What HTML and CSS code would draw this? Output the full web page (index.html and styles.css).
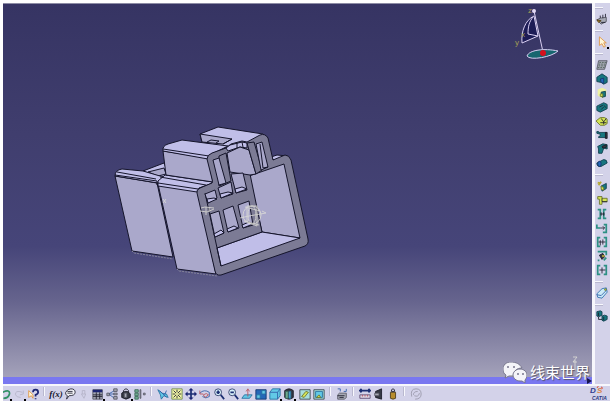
FILE: index.html
```html
<!DOCTYPE html>
<html lang="zh-CN">
<head>
    <meta charset="UTF-8">
    <meta name="viewport" content="width=device-width, initial-scale=1.0">
    <title>CATIA</title>
    <link rel="stylesheet" href="styles.css">
</head>
<body>
    <div class="app">
        <main class="viewport">
            <svg class="scene" viewBox="3 4 589 373" preserveAspectRatio="xMinYMin meet" role="img" aria-label="Connector part">
                <g class="part">
                    <!-- rear right tab -->
                    <path class="top" d="M200 134L218 127L263 134L266 137L250 147L223 147L202 142Z"/>
                    <path class="side" d="M200 134L232 139L223 144L202 142Z"/>
                    <path d="M207 142l4-2 8 1-3 2M223 144l9-5" fill="none"/>
                    <!-- left block -->
                    <path class="top" d="M143 171L164 163L170 176L165 180Z"/>
                    <path class="side" d="M148 172L164 168L166 174L158 176Z"/>
                    <path class="side" d="M115 176L157 183L173 257L132 251Z"/>
                    <path class="top" d="M115 176Q115 170 122 169L143 171L160 176L201 182L197 189L158 183Z"/>
                    <path d="M115 175L157 181V185M117 172L156 179" fill="none"/>
                    <!-- middle block -->
                    <path class="side" d="M158 184L198 191L216 274L177 269Z"/>
                    <path class="top" d="M158 181L165 175L213 182L210 184L199 188L197 192L158 186Z"/>
                    <path d="M158 183L198 189M160 177L206 185" fill="none"/>
                    <path class="edge" d="M132 251l2 2 39 6M177 269l2 2 38 5"/>
                    <!-- front left tab -->
                    <path class="side" d="M163 151L208 158L213 182L166 175Z"/>
                    <path class="top" d="M163 151Q162 146 168 144L182 140L228 146L210 155L208 159Z"/>
                    <path d="M163 149L209 156" fill="none"/>
                    <path class="top" d="M271 157L277 155L288 156L275 161Z"/>
                    <!-- front frame -->
                    <path class="front" d="M207 159Q207 155 212 153L226 148L231 144L242 141L247 142L260 135Q265 133 268 138L273 160L285 155Q289 155 291 160L308 239Q309 244 305 246L221 275Q216 276 215 271L197 193Q196 190 200 188L212 183Q213 182 212 179Z"/>
                    <path class="top" d="M226 148L230 145L242 142L247 143V148L240 147L228 151Z"/>
                    <path d="M237 143v5M242 142l1 5" fill="none"/>
                    <!-- cavity -->
                    <path class="side" d="M249 176L284 164L300 238L262 232Z"/>
                    <path class="top" d="M262 232L300 238L221 266L217 248Z"/>
                    <path class="front" d="M205 193L250 174L262 232L217 248Z" stroke="none"/>
                    <path d="M205 193L221 266M217 248L262 232L250 174" fill="none"/>
                    <path class="side" d="M227 153L240 147L249 150L256 174L250 175L230 172Z"/>
                    <path class="front" d="M249 150L247 143L254 142L262 170L256 174Z"/>
                    <path class="side" d="M256 144L262 142L268 167L261 170Z"/>
                    <path d="M260 144L263 168L268 167" fill="none"/>
                    <path class="front" d="M219 156L226 153L231 181L219 186Z"/>
                    <path class="side" d="M213 160L219 158L226 183L219 185Z"/>
                    <path class="side" d="M205 194L215 190L217 198L208 203ZM218 188L231 182L233 194L221 198ZM231 174L243 173L247 190L236 193ZM210 214L219 211L224 233L215 237ZM223 210L233 206L239 228L228 232ZM238 205L249 201L253 225L243 228Z"/>
                    <path class="top" d="M207 199l7-1 3 1-9 4zM220 194l8-2 5 1-12 5zM235 189l7-2 5 2-11 4zM214 234l7-4 3 3-9 4zM227 229l7-3 4 2-10 4zM242 225l7-3 4 2-10 4z"/>
                </g>
                <g class="ghost">
                    <ellipse cx="252" cy="215" rx="9" ry="9"/>
                    <ellipse cx="252" cy="215" rx="4" ry="9"/>
                    <path d="M240 218l9-2 17-3-4-2M245 207l15 4M244 221l15 4M247 206v16l10 4V206zM201 208l4-1 9 1M200 211l7 1 7-3M206 207v8M209 207v5M163 199l3 4M166 199l-3 4"/>
                    <path d="M575 360v11M573 357h4l-4 5h4"/>
                </g>
                <!-- compass -->
                <g class="compass">
                    <path class="sail" d="M534 16C525 20 521 32 522 43L538 36Z"/>
                    <path d="M533 17C529 22 528 27 528 34L538 36M534 11L543 52"/>
                    <path class="hull" d="M527 56C529 50 544 48 558 51C552 57 530 61 527 56Z"/>
                    <circle class="tip" cx="534" cy="11" r="2"/>
                    <circle class="pivot" cx="543" cy="53" r="3"/>
                    <text x="528" y="13">z</text>
                    <text x="521" y="37">x</text>
                    <text x="515" y="45">y</text>
                </g>
            </svg>
            <div class="watermark">
                <svg viewBox="0 0 24 21" aria-hidden="true">
                    <path d="M8 0C3 0 0 3 0 7c0 3 1 5 3 6l-1 3 4-2 5 0c-1-5 3-8 8-8C17 2 13 0 8 0z"/>
                    <path d="M17 7c-4 0-7 3-7 6s3 6 7 6h2l3 2v-3c1-1 2-3 2-5 0-3-3-6-7-6z"/>
                    <g class="eyes"><circle cx="5" cy="5" r="1"/><circle cx="11" cy="5" r="1"/><circle cx="15" cy="12" r="1"/><circle cx="20" cy="12" r="1"/></g>
                </svg>
                <span>线束世界</span>
            </div>
        </main>
        <div class="scrollbar"><i></i></div>

        <aside class="sidebar">
            <div class="tools">
                <button type="button" aria-label="Workbench"><svg viewBox="0 0 14 14"><path class="gray" d="M1 8l4-2 7-1v5l-6 3z"/><path class="k" d="M5 6V3M8 6V2M11 5V1M6 11h5"/><path class="gold" d="M1 8l5 1-3 2z"/></svg></button>
            </div>
            <div class="tools">
                <button type="button" class="more" aria-label="Select"><svg viewBox="0 0 14 14"><path class="cursor" d="M4 1v10l3-2 2 4 2-1-2-4h3z"/></svg></button>
            </div>
            <div class="tools">
                <button type="button" aria-label="Sketch"><svg viewBox="0 0 14 14"><path class="gray" d="M3 2h10l-3 10H1z"/><path class="dash" d="M4 4h8M3 6h8M3 8h8M2 10h8"/></svg></button>
                <button type="button" aria-label="Pad"><svg viewBox="0 0 14 14"><path class="teal" d="M1 5l6-4 6 4v6l-4 2-3-2-5-1z"/><path class="blue" d="M5 7l4-1v6l-3-1z"/></svg></button>
                <button type="button" aria-label="Pocket"><svg viewBox="0 0 14 14"><path class="pale" d="M2 3l5-2 5 2v7l-5 3-5-3z"/><path class="teal" d="M6 6l5-1v6l-4 1z"/><path class="lime" d="M5 8h3v3H5z"/></svg></button>
                <button type="button" aria-label="Shaft"><svg viewBox="0 0 14 14"><path class="teal" d="M1 6l8-4 4 2v5l-8 4-4-2z"/><path class="k" d="M4 7l4-2M6 10l3-3M9 5l3 3"/></svg></button>
                <button type="button" aria-label="Groove"><svg viewBox="0 0 14 14"><path class="lime" d="M0 7l5-4h5l3 2v5l-3 2H5z"/><path class="k" d="M6 4l3 4 3-4M5 9h7M9 8v3"/></svg></button>
                <button type="button" aria-label="Hole"><svg viewBox="0 0 14 14"><path class="teal" d="M1 3h2v1h9v6H3V9l2-1V6L1 5z"/><path class="dark" d="M11 4h2v7h-2z"/></svg></button>
                <button type="button" aria-label="Rib"><svg viewBox="0 0 14 14"><path class="teal" d="M2 4l6-3 5 1v5l-4-1-2 6H3V7z"/><path class="dark" d="M7 4l5-2v3l-4 1z"/></svg></button>
                <button type="button" aria-label="Slot"><svg viewBox="0 0 14 14"><path class="teal" d="M1 7l8-4q4 0 4 4l-7 4q-5 1-5-4z"/><ellipse class="blue" cx="4" cy="8" rx="2" ry="3"/></svg></button>
            </div>
            <div class="tools">
                <button type="button" aria-label="Fillet"><svg viewBox="0 0 14 14"><path class="teal" d="M6 7l6-3v6l-5 3z"/><path class="lime" d="M6 7l3 2v3l-3-1z"/><path class="goldline" d="M2 3l3 1M3 6L6 2"/></svg></button>
                <button type="button" aria-label="Chamfer"><svg viewBox="0 0 14 14"><path class="lime" d="M2 3h5v2h6v4H7v3H4V6H2z"/><path class="k" d="M7 5v4M7 9h6"/></svg></button>
                <button type="button" aria-label="Distance constraint"><svg viewBox="0 0 14 14"><path class="bracket" d="M2 2h3v10H2M12 2H9v10h3"/><path class="k" d="M5 7h5M6 5v4M9 5v4"/></svg></button>
                <button type="button" aria-label="Angle constraint"><svg viewBox="0 0 14 14"><path class="bracket" d="M1 3v4h4M8 12h4V3H9"/><path class="k" d="M5 7h5M8 5l2 2-2 2"/></svg></button>
                <button type="button" aria-label="Fix constraint"><svg viewBox="0 0 14 14"><path class="bracket" d="M5 2H2v10h3M9 2h3v10H9"/><path class="k" d="M3 7h8M5 5v6M8 4v6"/></svg></button>
                <button type="button" aria-label="Contact constraint"><svg viewBox="0 0 14 14"><path class="bracket" d="M2 2h10v4M2 12h2M9 12l3-3"/><path class="dark" d="M4 6l4-2 2 4-3 3z"/><path class="goldline" d="M7 7h3"/></svg></button>
                <button type="button" aria-label="Offset constraint"><svg viewBox="0 0 14 14"><path class="bracket" d="M5 2H2v10h3M9 2h3v10H9"/><path class="k" d="M4 7h7M7 4v7"/></svg></button>
            </div>
            <div class="tools">
                <button type="button" aria-label="Measure"><svg viewBox="0 0 14 14"><path class="eraser" d="M1 8l6-6 5-1 1 5-6 7-5-1z"/><path class="blueline" d="M1 9l5 1 6-6"/><circle class="lime" cx="11" cy="3" r="1"/></svg></button>
            </div>
            <div class="tools">
                <button type="button" aria-label="Assemble"><svg viewBox="0 0 14 14"><path class="teal" d="M1 2l4-1 2 1v4l-4 2-2-1z"/><path class="teal" d="M7 7l3-1 3 1v4l-4 2-2-1z"/><path class="k" d="M3 8v3h4M3 3v4M9 8v4"/></svg></button>
            </div>
        </aside>

        <footer class="bottombar">
            <div class="tools">
                <button type="button" class="cut more" aria-label="Undo"><svg viewBox="0 0 14 14"><path class="greenline" d="M3 5q9-4 8 2-1 5-7 5"/></svg></button>
                <button type="button" class="more" aria-label="Redo"><svg viewBox="0 0 14 14"><path class="faint" d="M11 5Q2 2 3 8q1 3 6 3M8 8l4-1V3"/></svg></button>
                <button type="button" aria-label="What's this"><svg viewBox="0 0 14 14"><path class="cursor" d="M2 3v8l3-2 2 3V8z"/><path class="help" d="M7 5q0-3 3-3t3 3q0 2-3 3v2M10 12v1"/></svg></button>
            </div>
            <div class="tools">
                <button type="button" class="formula" aria-label="Formula">f(x)</button>
                <button type="button" aria-label="Comment"><svg viewBox="0 0 14 14"><path class="bubble" d="M3 13l1-4Q1 8 2 5q2-4 6-4 5 0 5 4t-7 4z"/><path class="k" d="M4 4h6M4 6h6"/></svg></button>
                <button type="button" aria-label="Lock"><svg viewBox="0 0 14 14"><path class="faint" d="M5 7V3h3v4M4 7h5l-2 5z"/></svg></button>
                <button type="button" class="more" aria-label="Design table"><svg viewBox="0 0 14 14"><path class="gray" d="M1 2h11v11H1z"/><path class="navy" d="M1 2h11v3H1z"/><path class="k" d="M1 8h11M1 10h11M5 5v8M9 5v8"/></svg></button>
                <button type="button" aria-label="Relations"><svg viewBox="0 0 14 14"><path class="blueline" d="M3 7l7-4M3 7h7M3 7l7 5"/><path class="gray" d="M9 1h4v3H9zM9 6h4v2H9zM9 10h4v3H9zM1 6h3v3H1z"/></svg></button>
                <button type="button" class="more" aria-label="Knowledge"><svg viewBox="0 0 14 14"><path class="k" d="M4 6V3q3-4 6 0v3"/><path class="dark" d="M2 6l3-2h4l3 3v4l-5 2-5-2z"/><path class="gray" d="M5 6h3v5H5z"/></svg></button>
                <button type="button" aria-label="Equivalent dimensions"><svg viewBox="0 0 14 14"><path class="greenfill" d="M1 2h4v3H1zM1 6h4v3H1zM1 10h4v3H1z"/><path class="gray" d="M7 2h1v10H7zM11 6h2v2h-2z"/></svg></button>
            </div>
            <div class="tools">
                <button type="button" aria-label="Fly mode"><svg viewBox="0 0 14 14"><path class="sky" d="M1 2l5 4 5 1 2 4-5-2-3 4-1-5z"/><path class="blueline" d="M3 3l8 8M9 8l2-5"/></svg></button>
                <button type="button" aria-label="Fit all in"><svg viewBox="0 0 14 14"><path class="pale" d="M1 1h12v12H1z" stroke="#6f8a4b"/><path class="k" d="M3 3l3 3M11 3L8 6M3 11l3-3M11 11L8 8M2 7h3M9 7h3M7 2v3M7 9v3"/></svg></button>
                <button type="button" aria-label="Pan"><svg viewBox="0 0 14 14"><path class="navyline" d="M7 2v10M2 7h10"/><path class="navy" d="M7 0l3 3H4zM7 14l3-3H4zM0 7l3-3v6zM14 7l-3-3v6z"/></svg></button>
                <button type="button" aria-label="Rotate"><svg viewBox="0 0 14 14"><path class="blueline" d="M1 6q5-5 11-1v5M12 10q-4 3-8 0"/><path class="redline" d="M1 3v4h4M5 8q4-3 6 0l-4 3z"/></svg></button>
                <button type="button" aria-label="Zoom in"><svg viewBox="0 0 14 14"><circle class="lens" cx="6" cy="5" r="4"/><path class="navyline" d="M9 8l4 5M4 5h4M6 3v4"/></svg></button>
                <button type="button" aria-label="Zoom out"><svg viewBox="0 0 14 14"><circle class="lens" cx="6" cy="5" r="4"/><path class="navyline" d="M9 8l4 5M4 5h4"/></svg></button>
                <button type="button" aria-label="Normal view"><svg viewBox="0 0 14 14"><path class="sky" d="M1 12l3-4h9l-3 4z"/><path class="redline" d="M8 10V2M6 4l2-3 2 3"/></svg></button>
                <button type="button" aria-label="Multi view"><svg viewBox="0 0 14 14"><path class="blue" d="M1 2h12v11H1z"/><path class="sky" d="M2 8h4v4H2zM8 3h4v4H8z"/></svg></button>
                <button type="button" class="more" aria-label="Isometric view"><svg viewBox="0 0 14 14"><path class="sky" d="M1 5l3-4h9v8l-3 4H1z"/><path class="blueline" d="M1 5h9v8M10 5l3-4"/></svg></button>
                <button type="button" class="more" aria-label="Shading"><svg viewBox="0 0 14 14"><path class="dark" d="M2 3q5-4 10 0v8q-5 4-10 0z"/><path class="greenfill" d="M3 4h3v8H3z"/><path class="sky" d="M7 4h2v8H7z"/></svg></button>
                <button type="button" class="apart" aria-label="Hide or show"><svg viewBox="0 0 14 14"><path class="screen" d="M1 2h12v11H1z"/><path class="lime" d="M3 10l5-6 3 1-5 6z"/></svg></button>
                <button type="button" aria-label="Swap visible space"><svg viewBox="0 0 14 14"><path class="screen" d="M1 2h12v11H1z"/><path class="sky" d="M3 4h8v7H3z"/><path class="lime" d="M4 11l3-3 2 3z"/></svg></button>
            </div>
            <div class="tools">
                <button type="button" aria-label="Print"><svg viewBox="0 0 14 14"><path class="gray" d="M2 8l2-2h8v5l-2 2H2z"/><path class="k" d="M2 9h8M4 11h5"/><path class="blueline" d="M5 4V1H2M9 4h3V1"/></svg></button>
            </div>
            <div class="tools">
                <button type="button" aria-label="Measure between"><svg viewBox="0 0 14 14"><path class="navyline" d="M1 3h12M3 1L1 3l2 2M11 1l2 2-2 2"/><path class="ruler" d="M1 8h12v4H1z"/><path class="redline" d="M4 8v2M7 8v2M10 8v2"/></svg></button>
                <button type="button" aria-label="Measure item"><svg viewBox="0 0 14 14"><path class="dark" d="M3 4l7-3v12l-7-2z"/><path class="gray" d="M2 6h5v3H2z"/></svg></button>
                <button type="button" aria-label="Measure inertia"><svg viewBox="0 0 14 14"><path class="gold" d="M4 5h6v7q-3 2-6 0z"/><path class="k" d="M5 4q0-3 2-3t2 3M5 4h4"/></svg></button>
            </div>
            <div class="tools">
                <button type="button" aria-label="Update" disabled><svg viewBox="0 0 14 14"><path class="swirl" d="M2 10Q0 1 7 1q6 0 6 6 0 6-7 6M4 8q0-4 5-4M5 9q5 2 6-3"/></svg></button>
            </div>
            <svg class="logo" viewBox="0 0 22 17" role="img" aria-label="CATIA">
                <path class="flare" d="M7 0q5-1 4 1L9 4M13 3q2 0 1 2"/>
                <text class="d" x="2" y="9">D</text>
                <text class="s" x="9" y="9">S</text>
                <text class="name" x="4" y="16">CATIA</text>
            </svg>
        </footer>
    </div>
</body>
</html>
```
FILE: styles.css
```css
* {
    box-sizing: border-box;
}
:root {
    --bar: #d3d2e9;
    --line: #15152b;
    --teal: #17767f;
}
body {
    margin: 0;
    background: white;
    font-family: "Liberation Sans", "Noto Sans CJK SC", sans-serif;
}
.app {
    height: 100vh;
    padding: 3px 4px 4px 3px;
    display: grid;
    grid-template-columns: minmax(0, 1fr) 18px;
    grid-template-rows: minmax(0, 1fr) 7px 17px;
}
.viewport {
    position: relative;
    border-top: 1px solid #8d8ca5;
    background: linear-gradient(#363463 0%, #403e6e 35%, #464579 65%, #67658e 80%, #a4a2ba 100%);
}
.scene {
    display: block;
    width: 100%;
    height: 100%;
}
.part {
    stroke: var(--line);
    stroke-width: 1;
    stroke-linejoin: round;
}
.part .top {
    fill: #c0bee8;
}
.part .side {
    fill: #aaa8cb;
}
.part .front {
    fill: #7c7b95;
}
.part .edge {
    fill: none;
    stroke: #85849a;
    stroke-dasharray: 2 1;
}
.ghost {
    fill: none;
    stroke: #deded8;
    stroke-width: 1;
    opacity: 0.8;
}
.compass {
    fill: none;
    stroke: #d9cff2;
    stroke-width: 1;
}
.compass .sail {
    fill: #1d1c56;
}
.compass .hull {
    fill: #17666f;
}
.compass .tip {
    fill: #e3d8f6;
    stroke: none;
}
.compass .pivot {
    fill: #d5101d;
    stroke: none;
}
.compass text {
    fill: #a29e55;
    stroke: none;
    font-size: 8px;
}
.watermark {
    position: absolute;
    right: 2px;
    bottom: -6px;
    display: flex;
    align-items: center;
    gap: 3px;
    color: white;
    font-size: 15px;
    line-height: 22px;
    font-family: "Noto Sans CJK SC", sans-serif;
    text-shadow: 1px 1px 1px #555468;
}
.watermark svg {
    width: 24px;
    height: 21px;
    fill: #f4f4f8;
    stroke: #77768d;
    stroke-width: 1;
}
.watermark .eyes {
    fill: #77768d;
    stroke: none;
}
.scrollbar {
    grid-row: 2;
    background: #7977f0;
    display: flex;
    justify-content: flex-end;
    align-items: center;
}
.scrollbar i {
    border: 3px solid transparent;
    border-left: 5px solid #17164f;
    border-right: 0;
}
.sidebar {
    grid-column: 2;
    grid-row: 1 / 3;
    display: flow-root;
    background: var(--bar);
    border-left: 3px solid #f7f7fc;
    overflow: hidden;
}
.sidebar .tools {
    display: flow-root;
}
.sidebar .tools::before {
    content: "";
    display: block;
    width: 8px;
    height: 1px;
    margin: 4px 0;
    background: #f8f8fd;
    box-shadow: 0 1px #b9b8cf;
}
.bottombar {
    grid-column: 1 / 3;
    display: flex;
    align-items: flex-end;
    background: var(--bar);
    border-top: 2px solid #f7f7fc;
    overflow: hidden;
}
.bottombar .tools {
    display: flex;
}
.bottombar .tools + .tools::before {
    content: "";
    width: 1px;
    height: 9px;
    margin: 0 4px;
    background: #f8f8fd;
    box-shadow: -1px 0 #b9b8cf;
}
button {
    position: relative;
    display: flex;
    justify-content: center;
    align-items: center;
    width: 14px;
    height: 14px;
    padding: 0;
    border: 0;
    background: none;
}
button svg {
    flex: none;
    width: 12px;
    height: 12px;
    fill: none;
    stroke-width: 1;
}
.more::after {
    content: "";
    position: absolute;
    right: 0;
    bottom: 0;
    width: 2px;
    height: 2px;
    background: black;
}
.cut {
    width: 9px;
    justify-content: flex-end;
    overflow: hidden;
}
.apart {
    margin-left: 2px;
}
.formula {
    font: italic bold 9px "Liberation Serif", serif;
    color: #15152b;
}
.k { stroke: #20202f; }
.dark { fill: #353944; stroke: #181a25; }
.gray { fill: #a6a9b5; stroke: #555763; }
.teal { fill: var(--teal); stroke: #123e4d; }
.blue { fill: #2568b8; stroke: #15336f; }
.sky { fill: #62c9e7; stroke: #256f9f; }
.navy { fill: #1c2472; }
.lime { fill: #d5e455; stroke: #68732b; }
.pale { fill: #eff3a4; }
.gold { fill: #b88c2d; stroke: #4b3b1a; }
.greenfill { fill: #70ae91; stroke: #3c6858; }
.screen { fill: #a8dfdc; stroke: #39454e; }
.ruler { fill: #e1d7e4; stroke: #5a4870; }
.lens { fill: #d8f0fa; stroke: #303a68; }
.eraser { fill: #cceaf7; stroke: #2f6fad; }
.bubble { fill: #f2f2f7; stroke: #20202f; }
.cursor { fill: #fff7d8; stroke: #df9441; }
.dash { stroke: #4f6157; stroke-dasharray: 2 1; }
.bracket { stroke: #2d9084; stroke-width: 2; }
.goldline { stroke: #b6a934; stroke-width: 2; }
.blueline { stroke: #315fa8; }
.navyline { stroke: #1d2f73; stroke-width: 2; }
.redline { stroke: #b7515b; }
.greenline { stroke: #319065; stroke-width: 2; }
.help { stroke: #1c2472; stroke-width: 2; }
.faint { stroke: #b4b3c8; }
.swirl { stroke: #9998aa; stroke-width: 1; }
.logo {
    width: 22px;
    height: 17px;
    margin-left: auto;
    flex: none;
    overflow: visible;
    font-style: italic;
    font-weight: bold;
}
.logo .flare {
    fill: none;
    stroke: #d9503f;
}
.logo .d,
.logo .s {
    font-size: 8px;
    fill: #34408f;
}
.logo .s {
    fill: #d98045;
}
.logo .name {
    font-size: 5px;
    fill: #29347f;
}
```
